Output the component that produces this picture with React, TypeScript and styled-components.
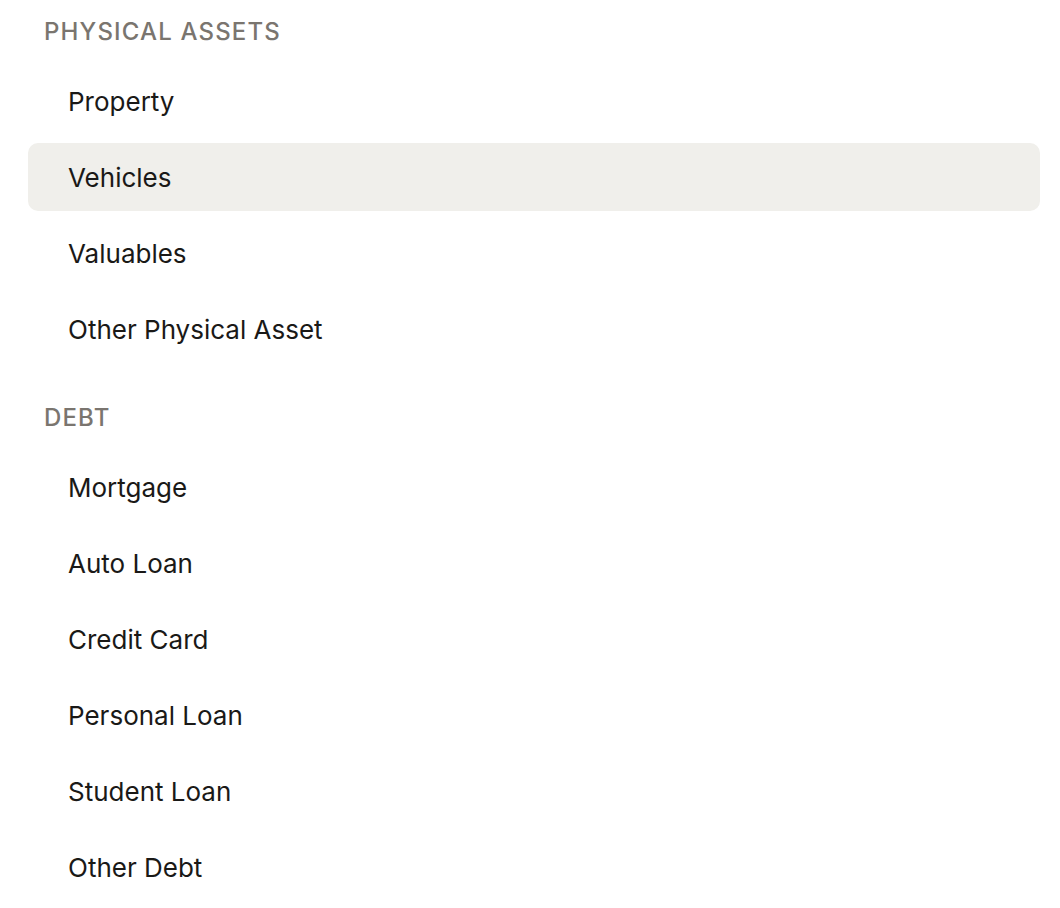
import { createGlobalStyle } from "styled-components";
import styled from "styled-components";

const GlobalStyle = createGlobalStyle`
  body {
    margin: 0;
    background: #ffffff;
    font-family: Inter, "Noto Sans", sans-serif;
    -webkit-font-smoothing: antialiased;
  }
`;

export const MenuContainer = styled.div`
  display: flex;
  flex-direction: column;
  gap: 38px;
  padding: 15px 20px 0 28px;
`;

export const MenuGroup = styled.section`
  display: flex;
  flex-direction: column;
`;

export const GroupTitle = styled.h3`
  margin: 0 0 20px;
  padding-left: 16px;
  height: 32px;
  display: flex;
  align-items: center;
  font-size: 24px;
  font-weight: 500;
  letter-spacing: 1.15px;
  text-transform: uppercase;
  color: #7a756f;
`;

export const ItemList = styled.div`
  display: flex;
  flex-direction: column;
  gap: 8px;
`;

export const MenuItem = styled.div<{ $active?: boolean }>`
  display: flex;
  align-items: center;
  height: 68px;
  padding: 0 40px;
  border-radius: 10px;
  font-size: 26px;
  font-weight: 400;
  color: #1a1917;
  background: ${(p) => (p.$active ? "#f0efeb" : "transparent")};
  cursor: pointer;
`;

const groups = [
  {
    title: "Physical Assets",
    items: ["Property", "Vehicles", "Valuables", "Other Physical Asset"],
  },
  {
    title: "Debt",
    items: [
      "Mortgage",
      "Auto Loan",
      "Credit Card",
      "Personal Loan",
      "Student Loan",
      "Other Debt",
    ],
  },
];

const App = () => {
  const active = "Vehicles";
  return (
    <>
      <GlobalStyle />
      <MenuContainer>
        {groups.map((group) => (
          <MenuGroup key={group.title}>
            <GroupTitle>{group.title}</GroupTitle>
            <ItemList>
              {group.items.map((item) => (
                <MenuItem key={item} $active={item === active}>
                  {item}
                </MenuItem>
              ))}
            </ItemList>
          </MenuGroup>
        ))}
      </MenuContainer>
    </>
  );
};

export default App;
